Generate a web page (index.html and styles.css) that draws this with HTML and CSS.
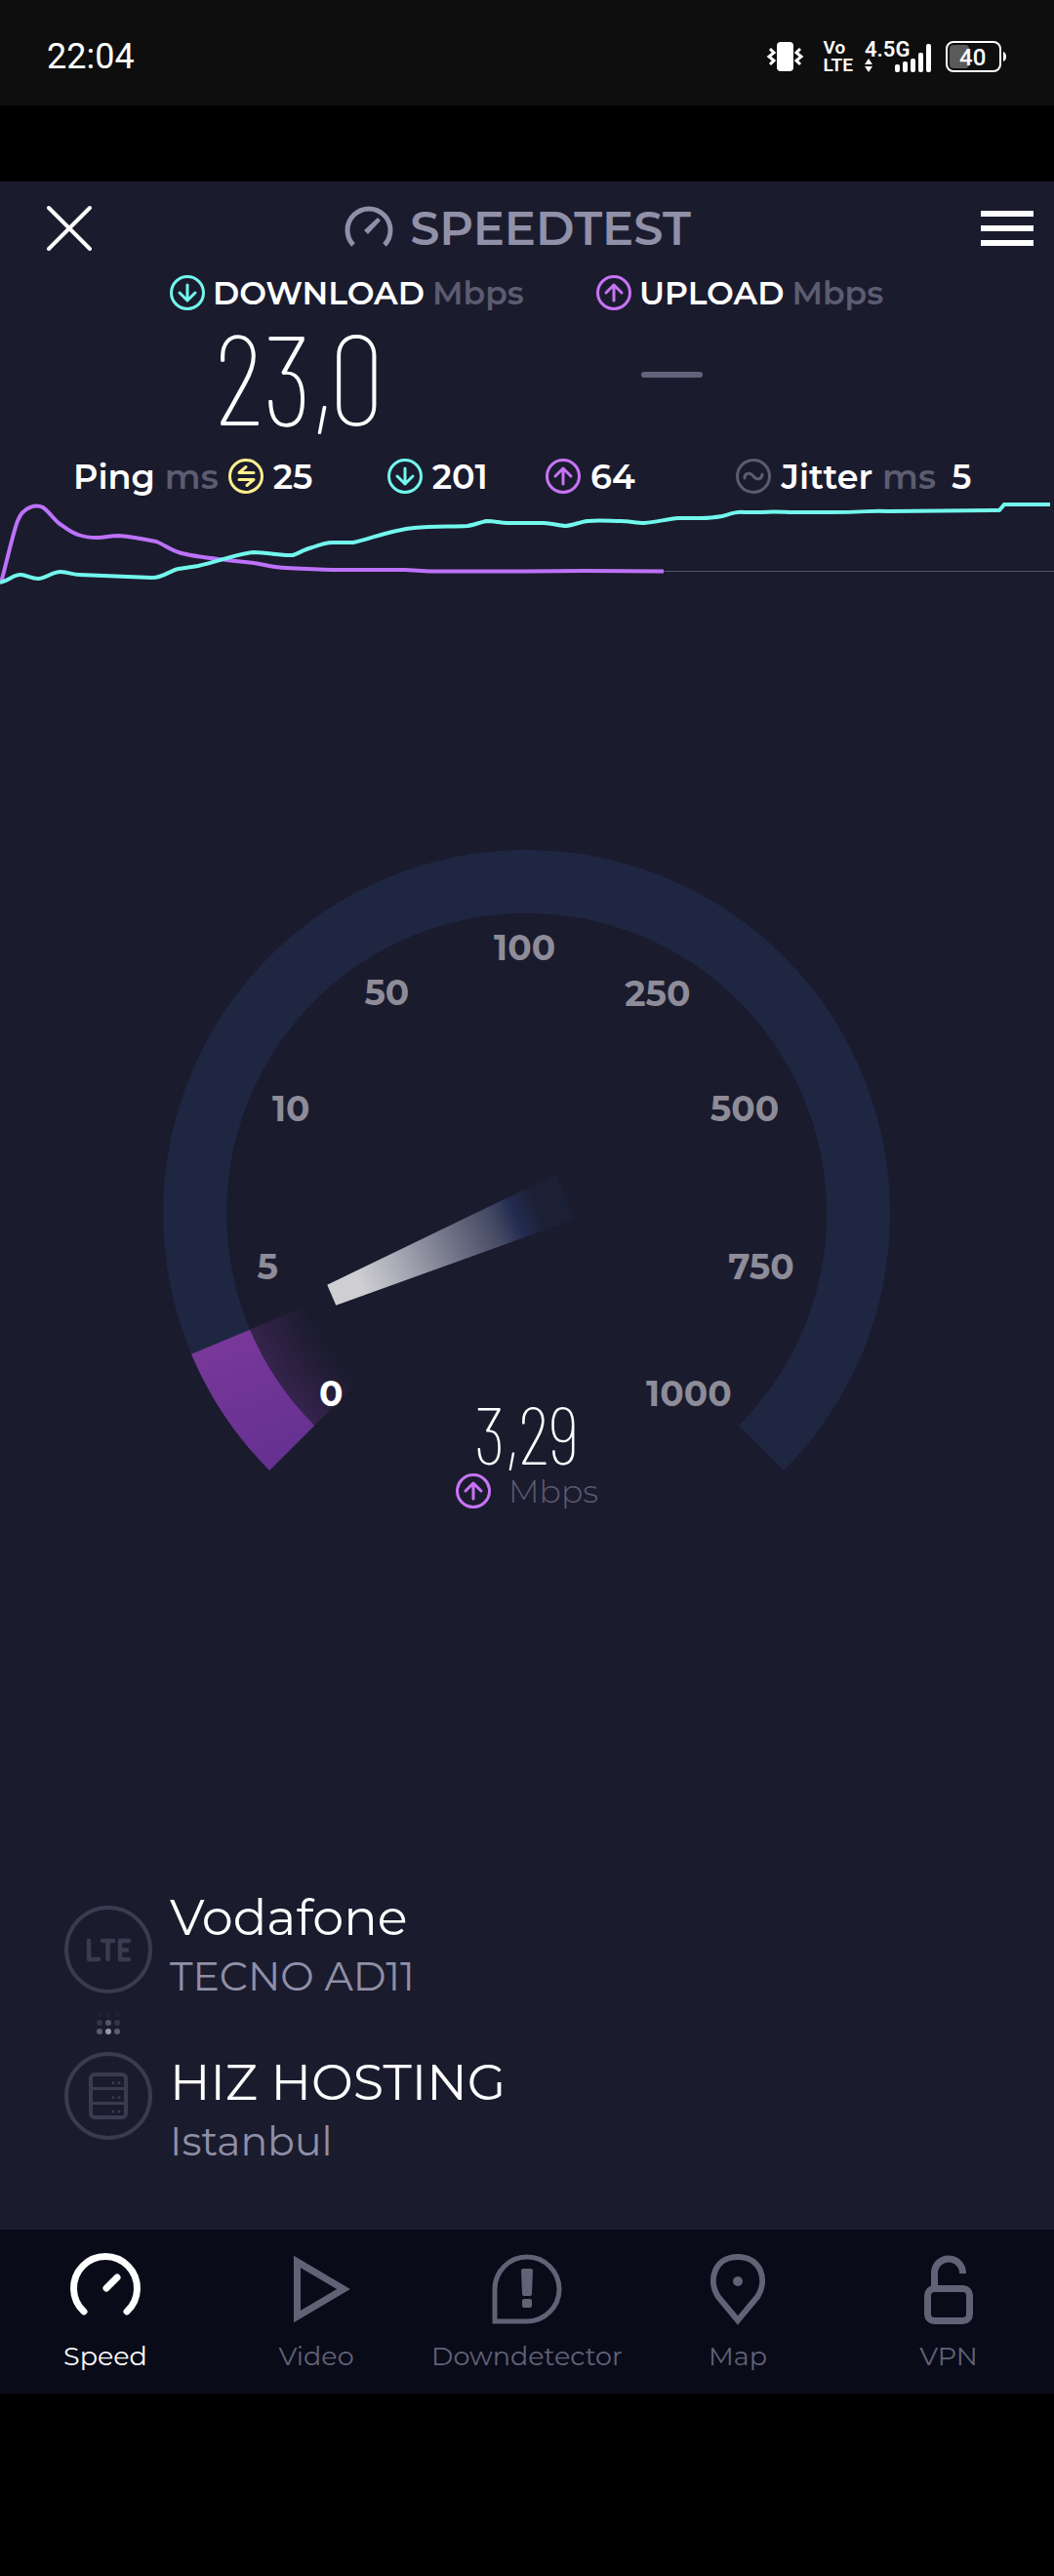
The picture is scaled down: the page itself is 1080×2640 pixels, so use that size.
FILE: index.html
```html
<!DOCTYPE html>
<html lang="en">
<head>
  <meta charset="UTF-8">
  <meta name="viewport" content="width=device-width, initial-scale=1.0">
  <title>Speedtest</title>
  <link rel="stylesheet" href="styles.css">
</head>
<body>
  <!-- Shared icons -->
  <svg class="sprite" aria-hidden="true">
    <symbol id="icon-down" viewBox="0 0 36 36">
      <circle cx="18" cy="18" r="16.5"/>
      <path d="M18 10v16M10 18l8 8 8-8"/>
    </symbol>
    <symbol id="icon-up" viewBox="0 0 36 36">
      <circle cx="18" cy="18" r="16.5"/>
      <path d="M18 26V10M10 18l8-8 8 8"/>
    </symbol>
    <symbol id="icon-idle" viewBox="0 0 36 36">
      <circle cx="18" cy="18" r="16.5"/>
      <path d="M26 14.500H11L18 8.500M11 21.500H26L19 27.500"/>
    </symbol>
    <symbol id="icon-jitter" viewBox="0 0 36 36">
      <circle cx="18" cy="18" r="16.5"/>
      <path d="M9 20c0-6 6-6 9-2s9 4 9-2"/>
    </symbol>
  </svg>

  <div class="status-bar">
    <span class="clock">22:04</span>
    <div class="status-icons">
      <svg width="38" height="32" viewBox="0 0 38 32">
        <rect x="10" y="1" width="17" height="30" rx="4" fill="#fff"/>
        <path d="M3 8l4 4-5 4 5 4-4 4M34 8l-4 4 5 4-5 4 4 4" fill="none" stroke="#fff" stroke-width="3"/>
      </svg>
      <div class="volte"><span>Vo</span><span>LTE</span></div>
      <svg width="70" height="34" viewBox="0 0 70 34" fill="#fff">
        <text class="net" x="0" y="17">4.5G</text>
        <path d="M0 25l4-6 4 6zM0 27h8l-4 6z"/>
        <rect x="31" y="25" width="5" height="8" rx="2"/>
        <rect x="39" y="22" width="5" height="11" rx="2"/>
        <rect x="47" y="19" width="5" height="14" rx="2"/>
        <rect x="55" y="13" width="5" height="20" rx="2"/>
        <rect x="63" y="4" width="5" height="29" rx="2"/>
      </svg>
      <svg width="64" height="34" viewBox="0 0 64 34">
        <rect x="2" y="2" width="55" height="30" rx="7" fill="none" stroke="#fff" stroke-width="2"/>
        <rect x="5" y="5" width="20" height="24" rx="4" fill="#5a5a5a"/>
        <path d="M60 12q3 1 3 5t-3 5z" fill="#fff"/>
        <text class="charge" x="15" y="26">40</text>
      </svg>
    </div>
  </div>

  <main class="app">
    <header class="top-bar">
      <button class="icon-button" type="button" aria-label="Close">
        <svg width="46" height="46" viewBox="0 0 46 46"><path d="M2 2l42 42M44 2L2 44" stroke="#fff" stroke-width="4" stroke-linecap="round"/></svg>
      </button>
      <h1 class="brand">
        <svg width="50" height="44" viewBox="0 0 50 44">
          <path d="M9 39A22 22 0 1 1 41 39" fill="none" stroke="#9091a8" stroke-width="5"/>
          <path d="M20 24L34 11l3 3-13 14z" fill="#9091a8"/>
        </svg>
        SPEEDTEST
      </h1>
      <button class="icon-button" type="button" aria-label="Menu">
        <svg width="54" height="36" viewBox="0 0 54 36"><path d="M0 3h54M0 18h54M0 33h54" stroke="#fff" stroke-width="6"/></svg>
      </button>
    </header>

    <section class="speeds">
      <div class="speed">
        <h2><svg class="icon teal"><use href="#icon-down"/></svg>DOWNLOAD <small>Mbps</small></h2>
        <p class="speed-value">23,0</p>
      </div>
      <div class="speed">
        <h2><svg class="icon purple"><use href="#icon-up"/></svg>UPLOAD <small>Mbps</small></h2>
        <p class="speed-value"><span class="pending"></span></p>
      </div>
    </section>

    <section class="latency">
      <div>Ping <small>ms</small> <svg class="icon yellow"><use href="#icon-idle"/></svg>25</div>
      <div><svg class="icon teal"><use href="#icon-down"/></svg>201</div>
      <div><svg class="icon purple"><use href="#icon-up"/></svg>64</div>
      <div><svg class="icon muted"><use href="#icon-jitter"/></svg>Jitter <small>ms</small> <b>5</b></div>
    </section>

    <svg class="chart" viewBox="0 0 1080 92" fill="none" stroke-width="4">
      <path d="M680 75.500H1080" stroke="#56566a" stroke-width="1"/>
      <path d="M1 87C6 70 13 37 18 24C24 8 38 7 44 10C50 14 54 21 60 26C67 31 73 36 80 38C88 41 94 41 100 41C108 41 112 39 122 39C135 40 150 43 160 45C168 48 175 54 183 56C195 60 215 62 232 64L260 67C268 68 274 70 282 71C300 73 320 73 340 74H415L440 75.500H540L600 75L680 75.500" stroke="#bd72fb"/>
      <path d="M0 87C10 85 14 78 22 79C29 80 34 84 40 83C48 82 54 76 62 76C70 76 74 79 81 79L155 82C166 83 173 75 183 73L203 70C222 66 244 57 260 56C274 56 290 60 300 59C306 57 312 53 320 51C328 48 334 46 341 46H362C380 42 402 33 424 31C444 29 464 30 479 29C486 28 492 25 499 24C508 24 512 26 520 26H557C566 26 572 29 580 29C588 28 594 25 602 24C614 23 626 24 636 24C644 24 652 26 660 26C672 25 684 22 695 21H719C728 21 734 20 740 19C748 17 754 14 762 15H781C792 14 805 15 812 15H850C890 15 890 13 910 14L1024 13L1029 7H1076" stroke="#72f8ed"/>
    </svg>

    <section class="gauge">
      <svg class="dial" viewBox="0 0 744 700">
        <defs>
          <radialGradient id="glow" gradientUnits="userSpaceOnUse" cx="372" cy="372" r="307">
            <stop offset="0.8" stop-color="#7a389a" stop-opacity="0"/>
            <stop offset="1" stop-color="#7a389a" stop-opacity="0.28"/>
          </radialGradient>
          <linearGradient id="progress" x1="0" y1="0" x2="0.3" y2="1">
            <stop offset="0" stop-color="#7b399b"/>
            <stop offset="1" stop-color="#663191"/>
          </linearGradient>
          <linearGradient id="needle" gradientUnits="userSpaceOnUse" x1="173" y1="456" x2="411" y2="355">
            <stop offset="0.12" stop-color="#cfced3"/>
            <stop offset="0.3" stop-color="#a6a8b3"/>
            <stop offset="0.55" stop-color="#686b80"/>
            <stop offset="0.7" stop-color="#444963"/>
            <stop offset="0.79" stop-color="#232c50"/>
            <stop offset="0.88" stop-color="#1c2036"/>
            <stop offset="1" stop-color="#1b2034"/>
          </linearGradient>
        </defs>
        <path d="M109 635A372 372 0 1 1 635 635L589 589A307 307 0 1 0 155 589Z" fill="#1f2642"/>
        <path d="M155 589A307 307 0 0 1 89 491L145 467A246 246 0 0 0 198 546Z" fill="url(#glow)"/>
        <path d="M109 635A372 372 0 0 1 29 516L89 491A307 307 0 0 0 155 589Z" fill="url(#progress)"/>
        <path d="M168 445L177 466L421 378L402 332Z" fill="url(#needle)"/>
        <g class="ticks">
          <text class="reached" x="172" y="569">0</text>
          <text x="107" y="439">5</text>
          <text x="131" y="278">10</text>
          <text x="229" y="159">50</text>
          <text x="370" y="113">100</text>
          <text x="506" y="160">250</text>
          <text x="595" y="278">500</text>
          <text x="612" y="439">750</text>
          <text x="538" y="569">1000</text>
        </g>
      </svg>
      <div class="reading">
        <p class="reading-value">3,29</p>
        <p class="reading-unit"><svg class="icon purple"><use href="#icon-up"/></svg>Mbps</p>
      </div>
    </section>

    <section class="hosts">
      <div class="host-icons">
        <svg width="90" height="90" viewBox="0 0 90 90" fill="none" stroke="#3b3b50" stroke-width="4">
          <circle cx="45" cy="45" r="43"/>
          <path d="M25 36v19h10M39 36h11M44.500 36v19M66 36H57v19h9M57 45.500h7" stroke-width="4.500" stroke-linecap="round" stroke-linejoin="round"/>
        </svg>
        <svg width="90" height="24" viewBox="0 0 90 24">
          <g fill="#212134"><circle cx="36" cy="3" r="3"/><circle cx="45" cy="3" r="3"/><circle cx="54" cy="3" r="3"/></g>
          <g fill="#353548"><circle cx="36" cy="12" r="3"/><circle cx="45" cy="12" r="3" fill="#565663"/><circle cx="54" cy="12" r="3"/></g>
          <g fill="#5c5c6a"><circle cx="36" cy="21" r="3"/><circle cx="45" cy="21" r="3" fill="#9a9aa6"/><circle cx="54" cy="21" r="3"/></g>
        </svg>
        <svg width="90" height="90" viewBox="0 0 90 90" fill="none" stroke="#3b3b50" stroke-width="4">
          <circle cx="45" cy="45" r="43"/>
          <rect x="27" y="23" width="36" height="44" rx="4"/>
          <path d="M27 37.500h36M27 52.500h36" stroke-width="3"/>
          <path d="M50 31.500h0M56 31.500h0M50 46.500h0M56 46.500h0M50 61h0M56 61h0" stroke-width="3" stroke-linecap="round"/>
        </svg>
      </div>
      <div class="host-names">
        <div>
          <h3>Vodafone</h3>
          <p>TECNO AD11</p>
        </div>
        <div>
          <h3>HIZ HOSTING</h3>
          <p>Istanbul</p>
        </div>
      </div>
    </section>

    <nav class="tabs">
      <a class="tab active" href="#speed">
        <svg width="74" height="74" viewBox="0 0 74 74">
          <path d="M15 60A32.500 32.500 0 1 1 59 60M38 36l11-11" stroke-width="7" stroke-linecap="round"/>
        </svg>
        Speed
      </a>
      <a class="tab" href="#video">
        <svg width="74" height="74" viewBox="0 0 74 74"><path d="M17.500 9v56L65 37z" stroke-width="7"/></svg>
        Video
      </a>
      <a class="tab" href="#downdetector">
        <svg width="74" height="74" viewBox="0 0 74 74">
          <path d="M4 70V37A33 33 0 1 1 37 70Z" stroke-width="5"/>
          <path d="M31 18q0-2 2-2h8q2 0 2 2l-1 24q0 2-2 2h-6q-2 0-2-2zM32 49q0-2 2-2h6q2 0 2 2v5q0 2-2 2h-6q-2 0-2-2z" class="solid"/>
        </svg>
        Downdetector
      </a>
      <a class="tab" href="#map">
        <svg width="74" height="74" viewBox="0 0 74 74">
          <path d="M37 69L17 45C6 28 13 4 37 4S68 28 57 45Z" stroke-width="6"/>
          <circle cx="37" cy="29" r="5" class="solid"/>
        </svg>
        Map
      </a>
      <a class="tab" href="#vpn">
        <svg width="74" height="74" viewBox="0 0 74 74">
          <rect x="15.500" y="36.500" width="43" height="33" rx="7" stroke-width="7"/>
          <path d="M22.500 36V20a14.500 14.500 0 0 1 29 1" stroke-width="7"/>
        </svg>
        VPN
      </a>
    </nav>
  </main>
</body>
</html>
```
FILE: styles.css
```css
* { box-sizing: border-box; }
body {
  margin: 0;
  background: #000;
  color: #fff;
  font-family: "Montserrat", "Inter", sans-serif;
}
h1, h2, h3, p { margin: 0; font-weight: 400; }
small { font-size: inherit; color: #5c5c70; }
svg { display: block; flex: none; overflow: visible; }
.sprite { position: absolute; width: 0; height: 0; }

/* Status bar */
.status-bar {
  display: flex;
  align-items: center;
  justify-content: space-between;
  height: 108px;
  padding: 8px 48px 0;
  background: #0e0e0e;
  font-family: Roboto, sans-serif;
}
.clock { font-size: 36px; }
.status-icons { display: flex; align-items: center; gap: 12px; }
.volte {
  display: flex;
  flex-direction: column;
  margin-left: 8px;
  font-size: 19px;
  font-weight: 600;
  line-height: 18px;
}
.net { font-size: 22px; font-weight: 600; }
.charge { font-size: 24px; font-weight: 500; fill: #fff; }

/* App */
.app { margin-top: 78px; background: #1b1b2e; }
.top-bar {
  display: flex;
  align-items: center;
  justify-content: space-between;
  height: 96px;
  padding: 0 21px 0 48px;
}
.icon-button { padding: 0; border: 0; background: none; cursor: pointer; }
.brand {
  display: flex;
  align-items: center;
  gap: 17px;
  margin-right: 38px;
  color: #9091a8;
  font-size: 48px;
  font-weight: 600;
}
.icon {
  width: 36px;
  height: 36px;
  fill: none;
  stroke: currentColor;
  stroke-width: 3;
  stroke-linecap: round;
  stroke-linejoin: round;
}
.teal { color: #72f8ed; }
.purple { color: #c774f5; }
.yellow { color: #fff08c; }
.muted { color: #5c5c70; }

.speeds {
  display: grid;
  grid-template-columns: 437fr 295fr;
  padding: 0 174px;
}
.speed h2 {
  display: flex;
  align-items: center;
  gap: 8px;
  height: 36px;
  font-size: 33px;
  font-weight: 600;
  white-space: nowrap;
}
.speed-value {
  display: flex;
  align-items: center;
  height: 132px;
  padding-left: 46px;
  font-family: "Barlow Condensed", "Roboto Condensed", Roboto, sans-serif;
  font-size: 130px;
  font-weight: 100;
  line-height: 132px;
}
.pending { width: 63px; height: 6px; border-radius: 3px; background: #62627a; }

.latency {
  display: grid;
  grid-template-columns: 321fr 162fr 195fr 248fr;
  padding: 0 77px 0 75px;
  margin-top: 18px;
  font-size: 35px;
  font-weight: 600;
}
.latency div { display: flex; align-items: center; gap: 10px; height: 40px; }
.latency b { margin-left: 6px; font-weight: 600; }
.chart { width: 100%; margin-top: 2px; }

/* Gauge */
.gauge { display: grid; justify-items: center; margin-top: 269px; }
.dial { grid-area: 1 / 1; width: 69%; }
.ticks {
  fill: #8d8c98;
  font-size: 36px;
  font-weight: 700;
  text-anchor: middle;
}
.ticks .reached { fill: #fff; }
.reading { grid-area: 1 / 1; align-self: end; padding-bottom: 24px; }
.reading-value {
  font-family: "Barlow Condensed", "Roboto Condensed", Roboto, sans-serif;
  font-size: 82px;
  font-weight: 100;
  line-height: 80px;
  text-align: center;
}
.reading-unit {
  display: flex;
  align-items: center;
  gap: 18px;
  height: 40px;
  color: #5c5c70;
  font-size: 33px;
  font-weight: 300;
}

/* Provider and server */
.hosts { display: flex; gap: 18px; padding: 361px 66px 63px; }
.host-icons { display: grid; align-content: start; gap: 18px; padding-top: 20px; }
.host-names { display: grid; align-content: start; gap: 49px; }
.host-names h3 { font-size: 51px; line-height: 64px; }
.host-names p { color: #8f90a6; font-size: 41px; line-height: 56px; }

/* Bottom tabs */
.tabs {
  display: grid;
  grid-template-columns: repeat(5, 1fr);
  height: 168px;
  padding-top: 24px;
  background: #090b19;
}
.tab {
  display: flex;
  flex-direction: column;
  align-items: center;
  gap: 15px;
  color: #626276;
  font-size: 27px;
  text-decoration: none;
}
.tab svg { fill: none; stroke: currentColor; }
.tab .solid { fill: currentColor; stroke: none; }
.tab.active { color: #fff; }
```
